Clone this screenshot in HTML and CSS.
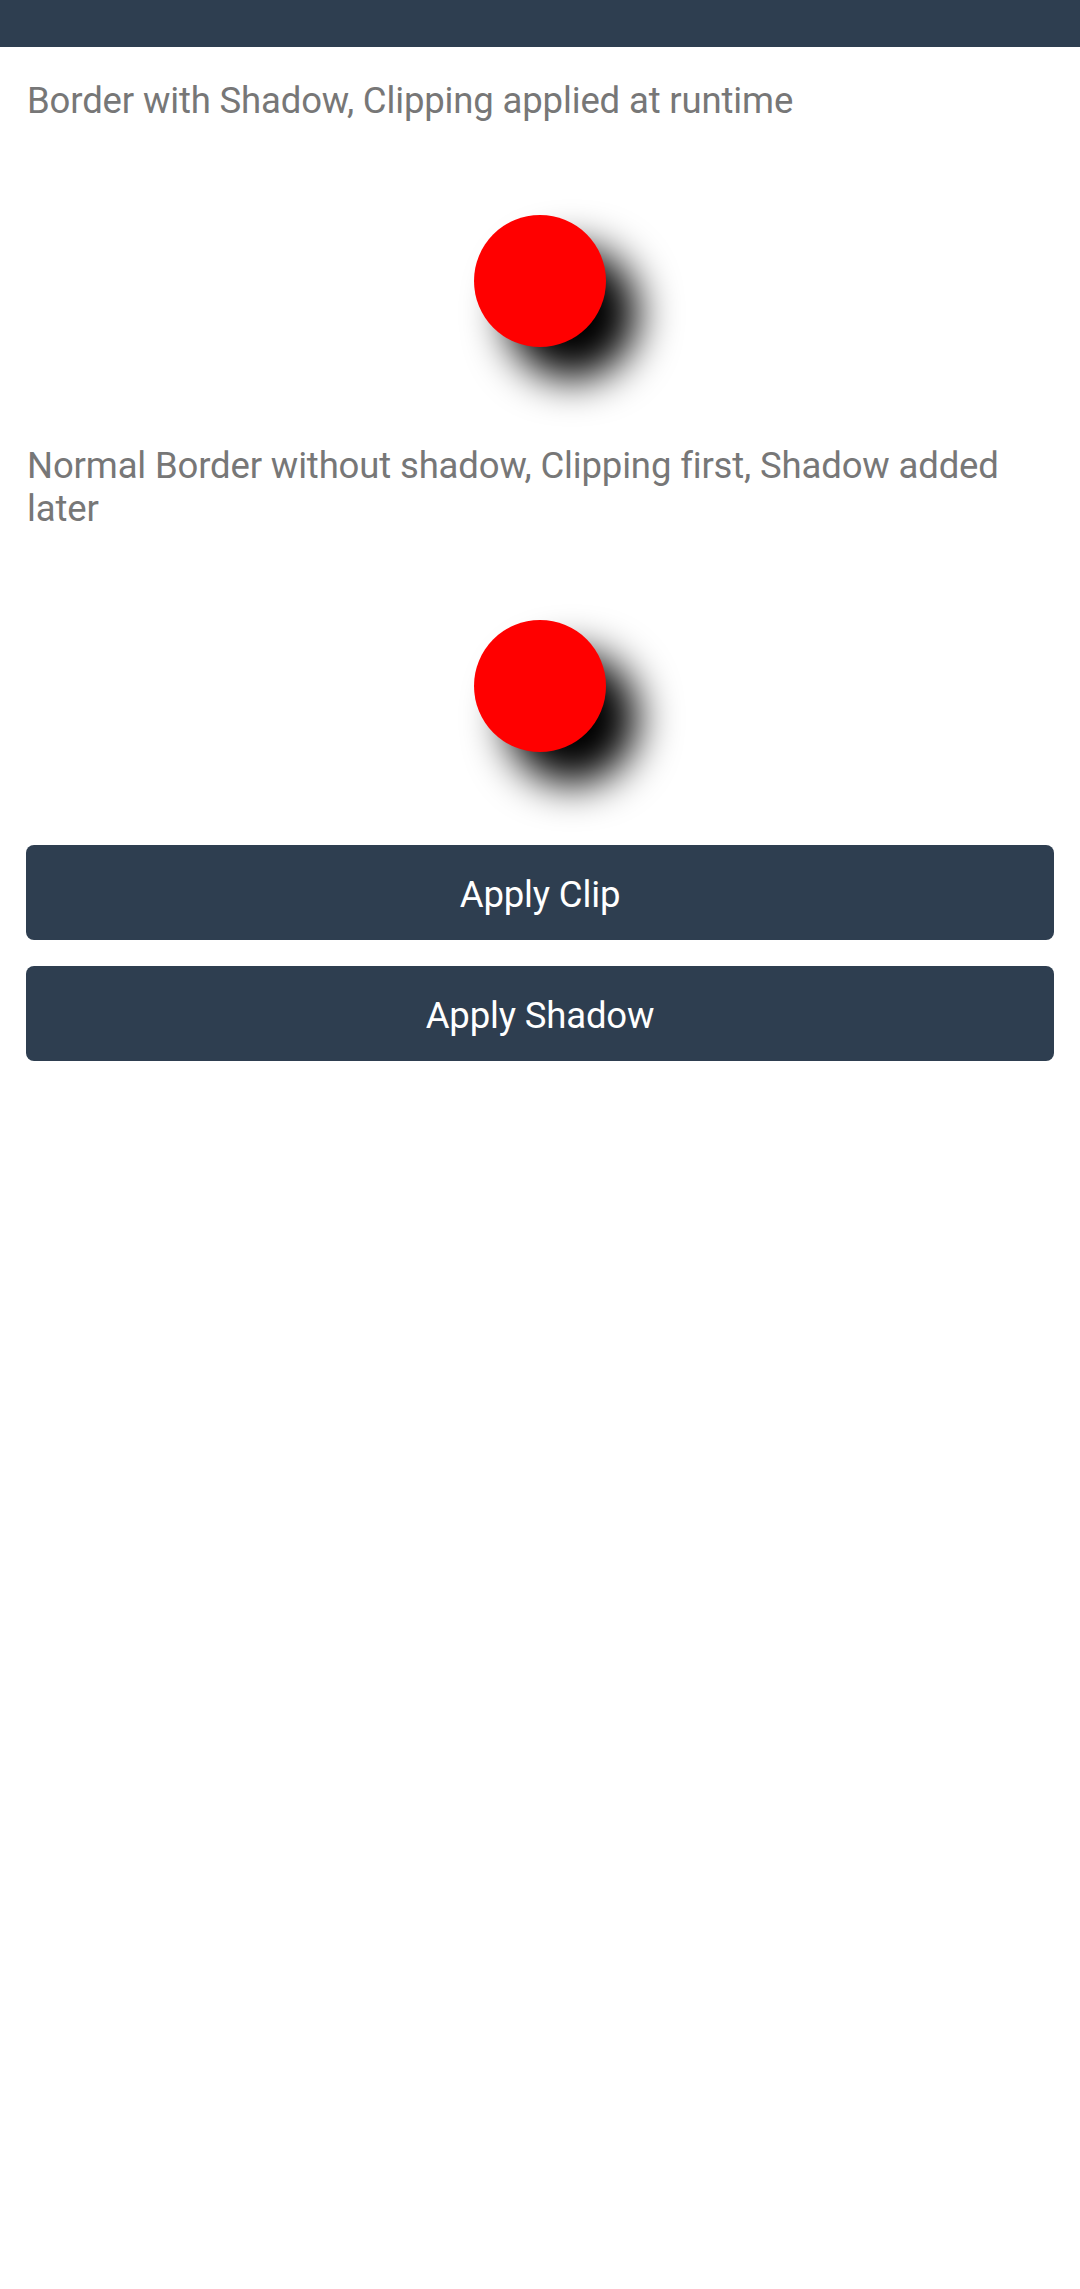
FILE: index.html
```html
<!DOCTYPE html>
<html>
<head>
<meta charset="utf-8">
<link rel="stylesheet" href="styles.css">
</head>
<body>
<div class="topbar"></div>
<main class="content">
  <p class="label label-first">Border with Shadow, Clipping applied at runtime</p>
  <div class="dot dot-first"></div>
  <p class="label label-second">Normal Border without shadow, Clipping first, Shadow added later</p>
  <div class="dot dot-second"></div>
  <button class="btn btn-first">Apply Clip</button>
  <button class="btn btn-second">Apply Shadow</button>
</main>
</body>
</html>
```

FILE: styles.css
```css
html, body {
  margin: 0;
  padding: 0;
  background: #ffffff;
}
body {
  width: 1080px;
  height: 2289px;
  font-family: Roboto, "Noto Sans", sans-serif;
}
.topbar {
  height: 47px;
  background: #2e3e50;
}
.content {
  display: flex;
  flex-direction: column;
  padding: 0 26px;
}
.label {
  margin: 0;
  font-size: 36.5px;
  letter-spacing: -0.15px;
  color: #777777;
  line-height: 43px;
  padding-left: 1px;
}
.label-first {
  margin-top: 32px;
}
.label-second {
  margin-top: 97px;
}
.dot {
  width: 132px;
  height: 132px;
  border-radius: 50%;
  background: #ff0000;
  align-self: center;
  box-shadow: 32px 32px 42px rgba(0, 0, 0, 1);
}
.dot-first {
  margin-top: 93px;
}
.dot-second {
  margin-top: 90px;
}
.btn {
  height: 95px;
  border: none;
  border-radius: 8px;
  background: #2e3e50;
  color: #ffffff;
  font-family: Roboto, "Noto Sans", sans-serif;
  font-size: 36.5px;
  letter-spacing: -0.15px;
  padding: 0;
  padding-top: 3px;
}
.btn-first {
  margin-top: 93px;
}
.btn-second {
  margin-top: 26px;
}
```
